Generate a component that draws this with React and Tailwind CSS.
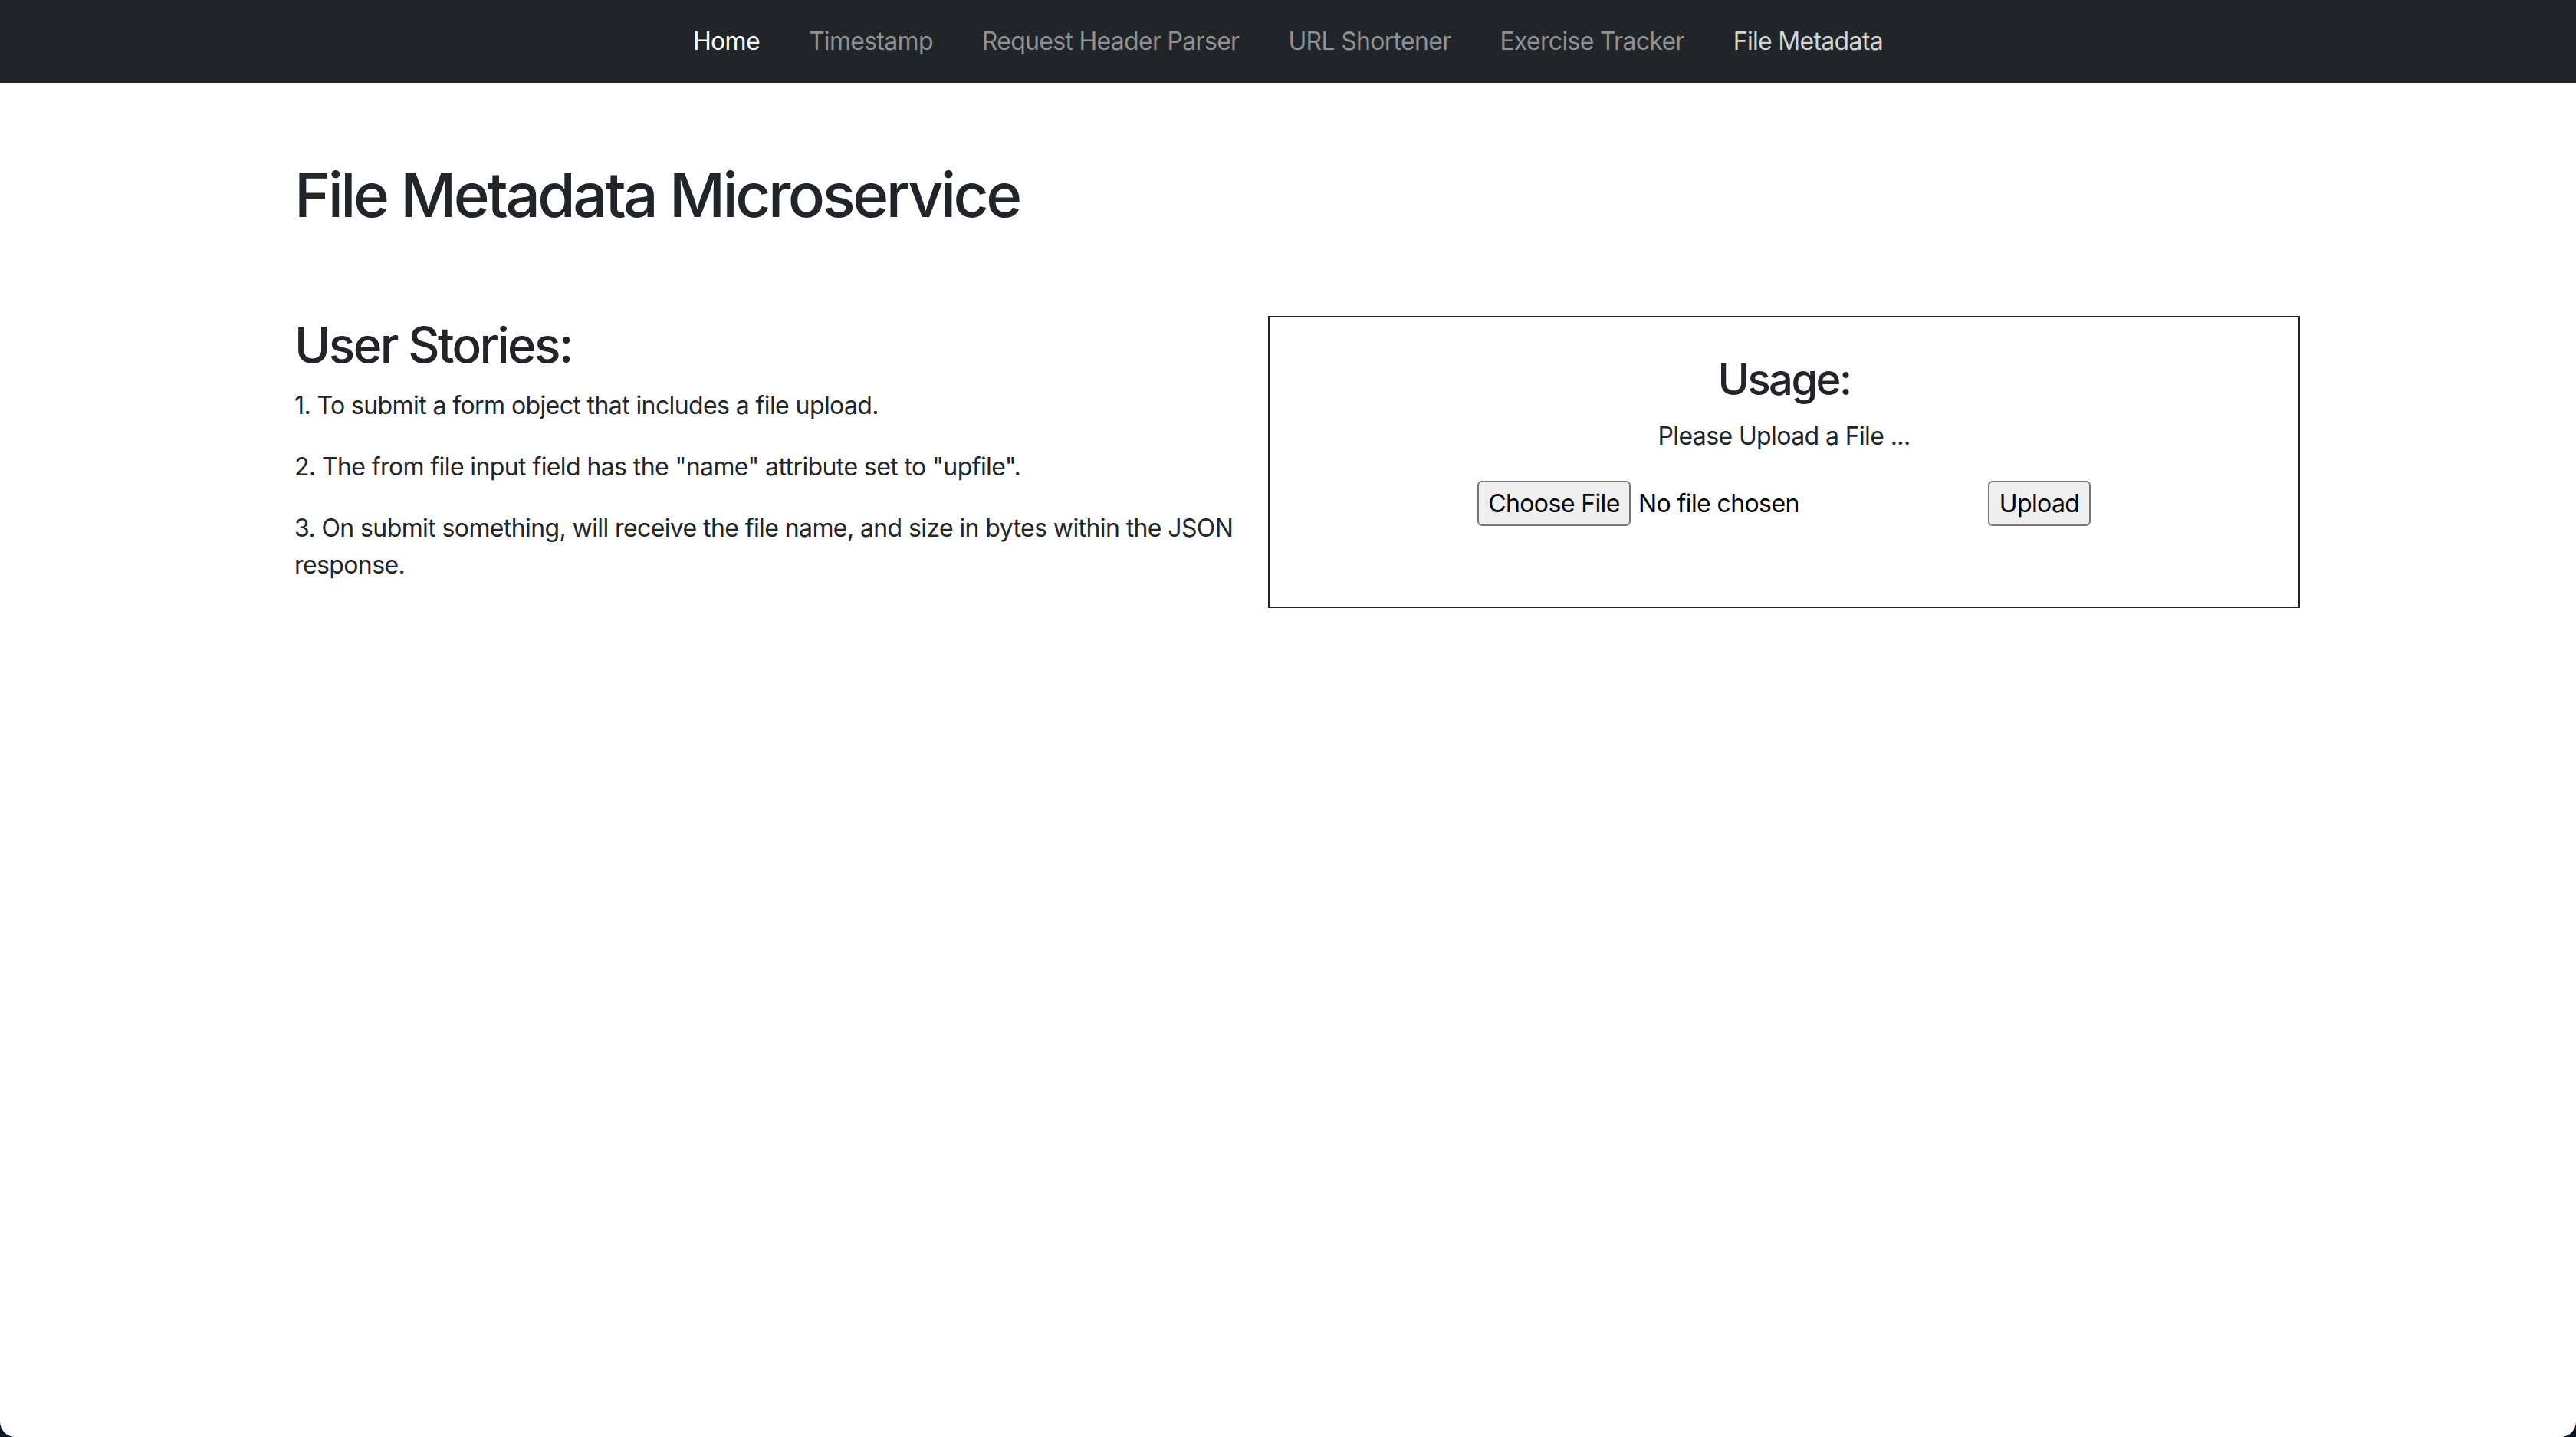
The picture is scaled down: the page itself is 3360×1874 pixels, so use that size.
import React from "react";

// Top navigation links
const navItems = [
  { title: "Home", tone: "text-white" },
  { title: "Timestamp", tone: "text-[#8f9194]" },
  { title: "Request Header Parser", tone: "text-[#8f9194]" },
  { title: "URL Shortener", tone: "text-[#8f9194]" },
  { title: "Exercise Tracker", tone: "text-[#8f9194]" },
  { title: "File Metadata", tone: "text-[#d3d4d5]" },
];

const stories = [
  "1. To submit a form object that includes a file upload.",
  '2. The from file input field has the "name" attribute set to "upfile".',
  "3. On submit something, will receive the file name, and size in bytes within the JSON response.",
];

const Navbar = () => (
  <nav className="h-[108px] bg-[#212529] flex items-center justify-center">
    {navItems.map((item) => (
      <a key={item.title} href="#" className={`px-[32px] text-[32px] leading-[48px] tracking-[-0.7px] ${item.tone}`}>
        {item.title}
      </a>
    ))}
  </nav>
);

const UsageBox = () => (
  <div className="w-[1346px] shrink-0 border-2 border-[#212529] pt-[48px] pb-[103px] text-center">
    <h3 className="text-[56px] font-medium leading-[1.2] tracking-[-2.5px] mb-[16px]">Usage:</h3>
    <p className="text-[32px] leading-[48px] tracking-[-0.6px] mb-[34px]">Please Upload a File ...</p>
    <form className="flex justify-center items-center" onSubmit={(e) => e.preventDefault()}>
      {/* Looks like the browser's own file input */}
      <div className="w-[657px] flex items-center text-[32px] tracking-[-0.6px] text-black">
        <button
          type="button"
          className="h-[59px] w-[200px] rounded-[6px] border-2 border-[#767676] bg-[#efefef] text-[32px] tracking-[-0.6px] text-black"
        >
          Choose File
        </button>
        <span className="ml-[10px]">No file chosen</span>
      </div>
      <button
        type="submit"
        className="ml-[9px] h-[59px] w-[134px] rounded-[6px] border-2 border-[#767676] bg-[#efefef] text-[32px] tracking-[-0.6px] text-black"
      >
        Upload
      </button>
    </form>
  </div>
);

export default function App() {
  return (
    <div className="min-h-[1874px] bg-[#0c1524] font-['Inter',sans-serif] text-[#212529]">
      <div className="min-h-[1874px] bg-white rounded-b-[20px] overflow-hidden">
        <Navbar />
        <main className="mx-auto w-[2640px] px-[24px]">
          <h1 className="mt-[98px] mb-[16px] text-[80px] font-medium leading-[1.2] tracking-[-3.5px]">
            File Metadata Microservice
          </h1>

          <div className="mt-[110px] flex">
            <div className="w-[1270px] shrink-0">
              <h2 className="text-[64px] font-medium leading-[1.2] tracking-[-2.6px] mb-[16px]">User Stories:</h2>
              {stories.map((s) => (
                <p key={s} className="text-[32px] leading-[48px] tracking-[-0.6px] mb-[32px] pr-[24px]">
                  {s}
                </p>
              ))}
            </div>
            <UsageBox />
          </div>
        </main>
      </div>
    </div>
  );
}
